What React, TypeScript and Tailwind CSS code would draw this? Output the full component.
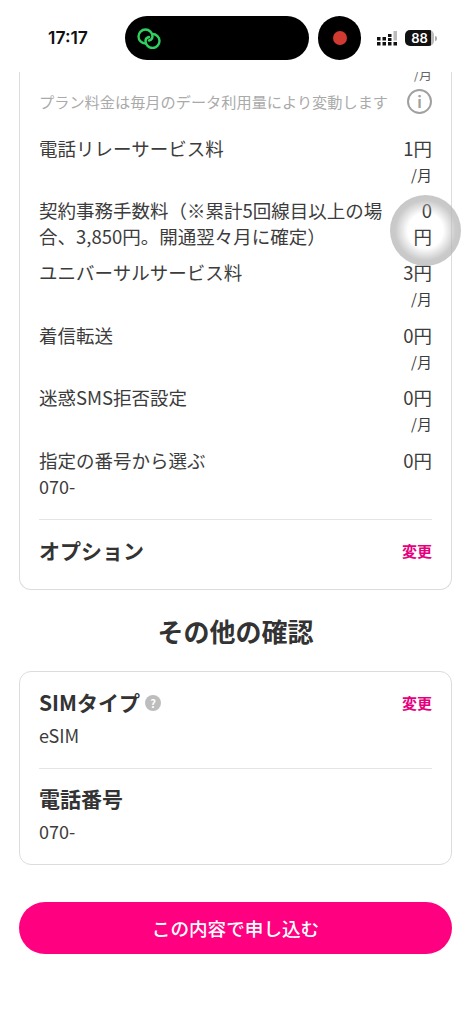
const FONT = "font-['Noto_Sans_CJK_JP','Noto_Sans',sans-serif]";

const rows = [
  { label: '電話リレーサービス料', price: '1円', unit: true, h: 'h-[62px]' },
  { label: '契約事務手数料（※累計5回線目以上の場合、3,850円。開通翌々月に確定）', price: '0\n円', unit: false, h: 'h-[62px]' },
  { label: 'ユニバーサルサービス料', price: '3円', unit: true, h: 'h-[63px]' },
  { label: '着信転送', price: '0円', unit: true, h: 'h-[62px]' },
  { label: '迷惑SMS拒否設定', price: '0円', unit: true, h: 'h-[63px]' },
];

function StatusBar() {
  return (
    <div className="h-[72px] flex items-start bg-white relative z-10">
      <span className="ml-[48px] mt-[27px] w-[44px] text-[17.5px] leading-[22px] font-semibold text-[#111] font-['Inter',sans-serif] whitespace-nowrap">17:17</span>
      <div className="ml-[33px] mt-[16px] w-[184px] h-[44px] rounded-[22px] bg-black flex items-center pl-[11px]">
        <svg width="26" height="21" viewBox="0 0 26 21" fill="none" stroke="#2fd060" strokeWidth="2.4" strokeLinecap="round">
          <path d="M9.5 15.5 A7 7 0 1 1 16.5 8.5 C16.5 10.5 15 12 13 12.5" />
          <path d="M16.5 6 A7 7 0 1 1 9.5 13 C9.5 11 11 9.5 13 9" />
        </svg>
      </div>
      <div className="ml-[9px] mt-[16px] w-[43px] h-[44px] rounded-full bg-black flex items-center justify-center">
        <div className="w-[14px] h-[14px] rounded-full bg-[#d13a30]" />
      </div>
      <svg className="ml-[16px] mt-[30px]" width="22" height="16" viewBox="0 0 22 16" fill="#111">
        <rect x="0" y="7" width="3.5" height="3.5" /><rect x="0" y="12" width="3.5" height="3.5" />
        <rect x="5.5" y="7" width="3.5" height="3.5" /><rect x="5.5" y="12" width="3.5" height="3.5" />
        <rect x="11" y="4" width="3.5" height="3" /><rect x="11" y="8" width="3.5" height="3" /><rect x="11" y="12" width="3.5" height="3.5" />
        <rect x="16.5" y="1" width="3.5" height="9.5" fill="#bbb" /><rect x="16.5" y="12" width="3.5" height="3.5" />
      </svg>
      <div className="ml-[6px] mt-[30px] flex items-center">
        <div className="w-[29px] h-[16px] rounded-[5px] bg-[linear-gradient(to_right,#111_88%,#bbb_88%)] text-white text-[13px] leading-[16px] text-center font-semibold font-['Inter',sans-serif]">88</div>
        <div className="w-[2px] h-[5px] bg-[#aaa] rounded-r-[2px] ml-[1px]" />
      </div>
    </div>
  );
}

function Row({ label, price, unit, h }: { label: string; price: string; unit: boolean; h: string }) {
  return (
    <div className={`flex justify-between ${h}`}>
      <div className="w-[350px] text-[18.5px] leading-[26px] text-[#3c3c3c]">{label}</div>
      <div className="text-right text-[18.5px] leading-[26px] text-[#3c3c3c] whitespace-pre-line">
        {price}
        {unit && <div className="text-[15px] leading-[26px] mt-[1px]">/月</div>}
      </div>
    </div>
  );
}

export default function App() {
  return (
    <div className={`w-[471px] h-[1024px] bg-white overflow-hidden relative ${FONT}`}>
      <StatusBar />
      <div className="mx-[19px] w-[433px] h-[518px] border border-t-0 border-[#dcdcdc] rounded-b-[12px] px-[19px]">
        <div className="h-[3px] text-right text-[13px] leading-[3px] text-[#666]">/月</div>
        <div className="mt-[8px] flex items-center justify-between h-[36px] mb-[16px]">
          <span className="text-[15.2px] text-[#aaa] whitespace-nowrap">プラン料金は毎月のデータ利用量により変動します</span>
          <div className="w-[25px] h-[25px] rounded-full border-2 border-[#a0a0a0] text-[#a0a0a0] text-[15px] leading-[21px] text-center font-bold shrink-0">i</div>
        </div>
        {rows.map(r => <Row key={r.label} {...r} />)}
        <div className="flex justify-between text-[18.5px] leading-[26px] text-[#3c3c3c]">
          <span>指定の番号から選ぶ</span>
          <span>0円</span>
        </div>
        <div className="text-[18px] leading-[26px] text-[#3c3c3c] h-[46px]">070-</div>
        <div className="border-t border-[#e4e4e4] flex items-center justify-between h-[63px]">
          <span className="text-[21px] font-bold text-[#333]">オプション</span>
          <span className="text-[15px] font-bold text-[#e6007e]">変更</span>
        </div>
      </div>
      <h2 className="text-center text-[26px] font-bold text-[#333] mt-[23px] leading-[36px]">その他の確認</h2>
      <div className="mx-[19px] mt-[22px] w-[433px] h-[194px] border border-[#dcdcdc] rounded-[12px] px-[19px] pt-[13px]">
        <div className="flex items-center justify-between h-[36px]">
          <div className="flex items-center gap-[5px]">
            <span className="text-[21px] font-bold text-[#333]">SIMタイプ</span>
            <div className="w-[16px] h-[16px] rounded-full bg-[#bdbdbd] text-white text-[11px] leading-[16px] text-center font-bold">?</div>
          </div>
          <span className="text-[15px] font-bold text-[#e6007e]">変更</span>
        </div>
        <div className="text-[18px] leading-[26px] mt-[1px] text-[#3c3c3c] h-[46px]">eSIM</div>
        <div className="border-t border-[#e4e4e4] pt-[11px]">
          <div className="text-[21px] font-bold text-[#333] leading-[36px]">電話番号</div>
          <div className="text-[18px] leading-[26px] mt-[2px] text-[#3c3c3c]">070-</div>
        </div>
      </div>
      <button className="block mx-[19px] mt-[37px] w-[433px] h-[52px] rounded-full bg-[#ff0080] text-white text-[18.6px] font-medium">この内容で申し込む</button>
      <div className="absolute left-[390px] top-[195px] w-[71px] h-[71px] rounded-full bg-[radial-gradient(circle,rgba(255,255,255,0)_35%,rgba(180,180,180,0.7)_60%,rgba(175,175,175,0.8)_100%)]" />
    </div>
  );
}
